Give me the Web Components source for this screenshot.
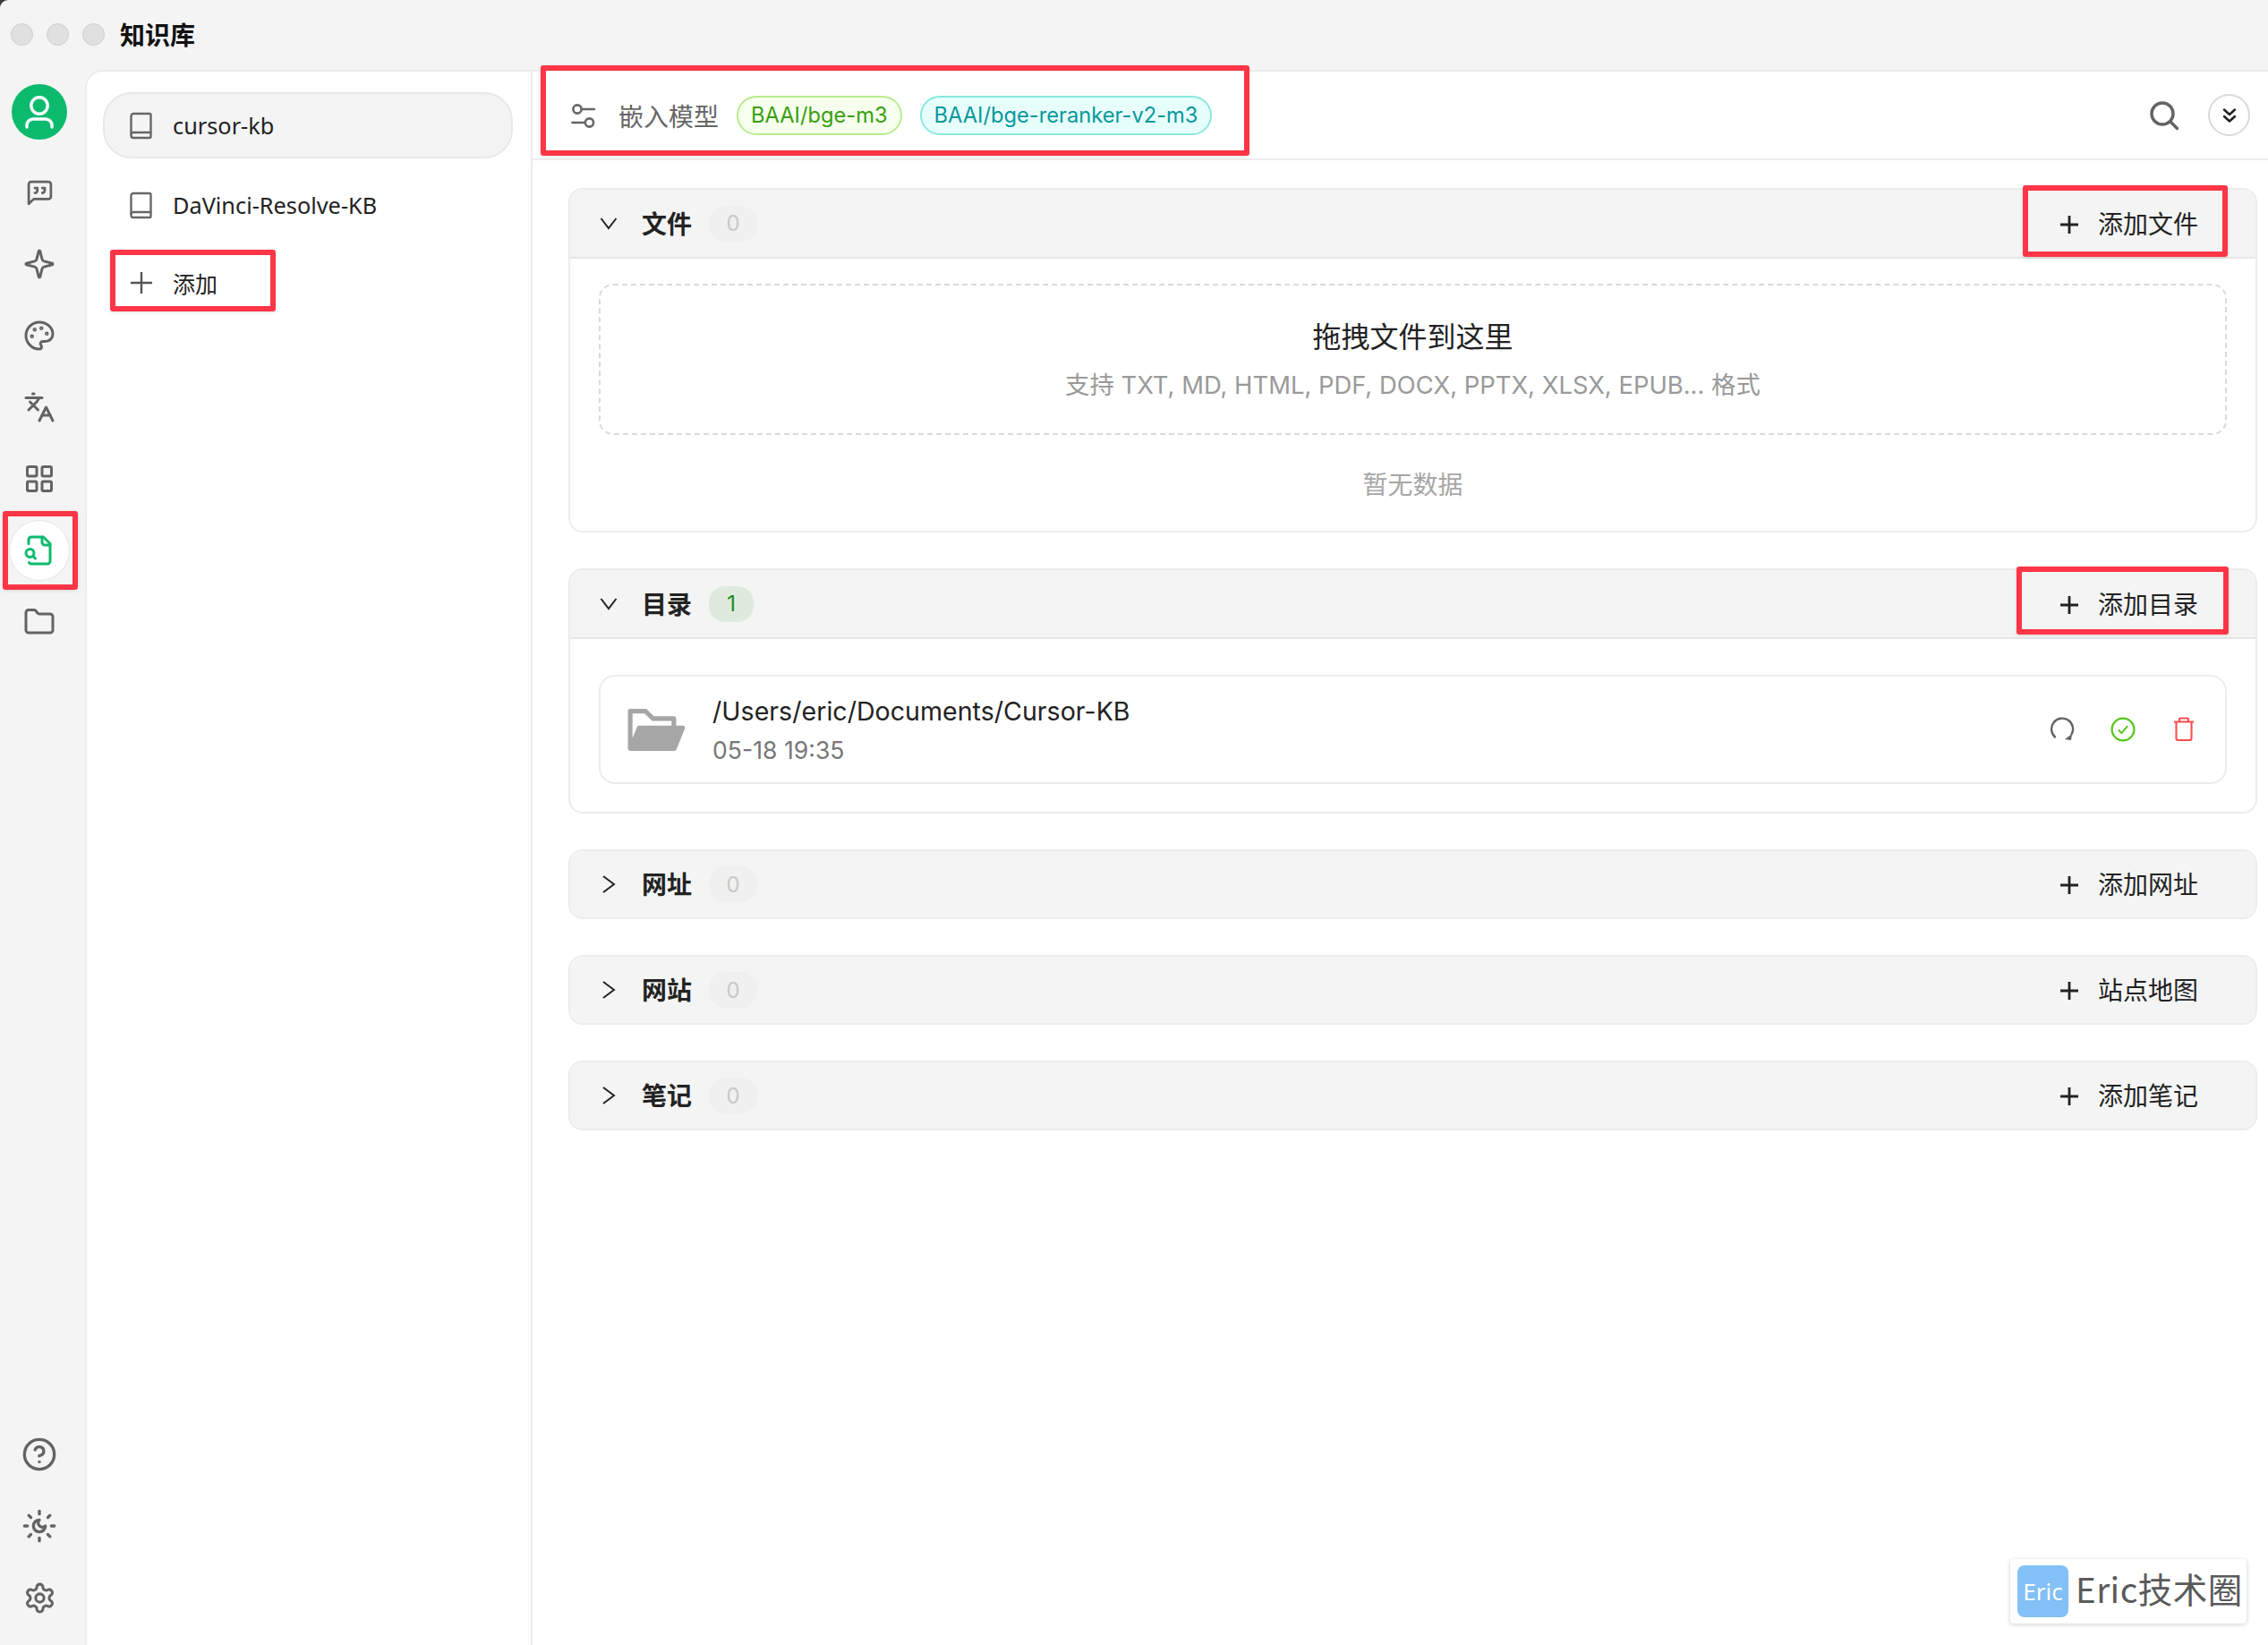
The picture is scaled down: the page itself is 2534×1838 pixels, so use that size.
<!DOCTYPE html>
<html lang="zh"><head><meta charset="utf-8"><title>知识库</title>
<style>
html,body{margin:0;padding:0;background:#3a3a3a}
body{font-family:"Inter","Noto Sans CJK SC",sans-serif;color:#222;width:2534px;height:1838px;overflow:hidden}
</style></head><body>
<app-window>
  <title-bar slot="title">知识库</title-bar>
  <nav-rail slot="rail">
    <user-avatar></user-avatar>
    <nav-icon name="chat" size="33"></nav-icon>
    <nav-icon name="sparkle"></nav-icon>
    <nav-icon name="palette"></nav-icon>
    <nav-icon name="languages"></nav-icon>
    <nav-icon name="grid"></nav-icon>
    <nav-icon name="filesearch" active></nav-icon>
    <nav-icon name="folder"></nav-icon>
    <nav-icon slot="bottom" name="help" size="40"></nav-icon>
    <nav-icon slot="bottom" name="sunmoon" size="40"></nav-icon>
    <nav-icon slot="bottom" name="settings" size="37"></nav-icon>
  </nav-rail>
  <kb-list slot="list">
    <kb-item active>cursor-kb</kb-item>
    <kb-item>DaVinci-Resolve-KB</kb-item>
    <kb-add>添加</kb-add>
  </kb-list>
  <kb-main slot="main">
    <kb-header slot="header">
      <kb-tag color="green">BAAI/bge-m3</kb-tag>
      <kb-tag color="cyan">BAAI/bge-reranker-v2-m3</kb-tag>
    </kb-header>
    <kb-section title="文件" count="0" action="添加文件" open>
      <drop-zone></drop-zone>
      <empty-note>暂无数据</empty-note>
    </kb-section>
    <kb-section title="目录" count="1" action="添加目录" open style="margin-top:40px">
      <dir-item path="/Users/eric/Documents/Cursor-KB" date="05-18 19:35"></dir-item>
    </kb-section>
    <kb-section title="网址" count="0" action="添加网址" style="margin-top:40px"></kb-section>
    <kb-section title="网站" count="0" action="站点地图" style="margin-top:40px"></kb-section>
    <kb-section title="笔记" count="0" action="添加笔记" style="margin-top:40px"></kb-section>
  </kb-main>
</app-window>
<red-mark x="3" y="571" w="84" h="88"></red-mark>
<red-mark x="123" y="279" w="185" h="69"></red-mark>
<red-mark x="604" y="73" w="792" h="101"></red-mark>
<red-mark x="2260" y="207" w="229" h="80"></red-mark>
<red-mark x="2253" y="633" w="237" h="76"></red-mark>
<water-mark></water-mark>
<script>
const ICONS={
 chat:'<path d="M21 15a2 2 0 0 1-2 2H7l-4 4V5a2 2 0 0 1 2-2h14a2 2 0 0 1 2 2z"/><path d="M8 12a2 2 0 0 0 2-2V8H8"/><path d="M14 12a2 2 0 0 0 2-2V8h-2"/>',
 sparkle:'<path d="M9.937 15.5A2 2 0 0 0 8.5 14.063l-6.135-1.582a.5.5 0 0 1 0-.962L8.5 9.936A2 2 0 0 0 9.937 8.5l1.582-6.135a.5.5 0 0 1 .963 0L14.063 8.5A2 2 0 0 0 15.5 9.937l6.135 1.581a.5.5 0 0 1 0 .964L15.5 14.063a2 2 0 0 0-1.437 1.437l-1.582 6.135a.5.5 0 0 1-.963 0z"/>',
 palette:'<circle cx="13.5" cy="6.5" r=".5" fill="currentColor"/><circle cx="17.5" cy="10.5" r=".5" fill="currentColor"/><circle cx="8.5" cy="7.5" r=".5" fill="currentColor"/><circle cx="6.5" cy="12.5" r=".5" fill="currentColor"/><path d="M12 2C6.5 2 2 6.5 2 12s4.5 10 10 10c.926 0 1.648-.746 1.648-1.688 0-.437-.18-.835-.437-1.125-.29-.289-.438-.652-.438-1.125a1.64 1.64 0 0 1 1.668-1.668h1.996c3.051 0 5.555-2.503 5.555-5.554C21.965 6.012 17.461 2 12 2z"/>',
 languages:'<path d="m5 8 6 6"/><path d="m4 14 6-6 2-3"/><path d="M2 5h12"/><path d="M7 2h1"/><path d="m22 22-5-10-5 10"/><path d="M14 18h6"/>',
 grid:'<rect width="7" height="7" x="3" y="3" rx="1"/><rect width="7" height="7" x="14" y="3" rx="1"/><rect width="7" height="7" x="14" y="14" rx="1"/><rect width="7" height="7" x="3" y="14" rx="1"/>',
 filesearch:'<path d="M14 2v4a2 2 0 0 0 2 2h4"/><path d="M4.268 21a2 2 0 0 0 1.727 1H18a2 2 0 0 0 2-2V7l-5-5H6a2 2 0 0 0-2 2v3"/><path d="m9 18-1.5-1.5"/><circle cx="5" cy="14" r="3"/>',
 folder:'<path d="M20 20a2 2 0 0 0 2-2V8a2 2 0 0 0-2-2h-7.9a2 2 0 0 1-1.69-.9L9.6 3.9A2 2 0 0 0 7.93 3H4a2 2 0 0 0-2 2v13a2 2 0 0 0 2 2Z"/>',
 help:'<circle cx="12" cy="12" r="10"/><path d="M9.09 9a3 3 0 0 1 5.83 1c0 2-3 3-3 3"/><path d="M12 17h.01"/>',
 sunmoon:'<path d="M12 8a2.83 2.83 0 0 0 4 4 4 4 0 1 1-4-4"/><path d="M12 2v2"/><path d="M12 20v2"/><path d="m4.9 4.9 1.4 1.4"/><path d="m17.7 17.7 1.4 1.4"/><path d="M2 12h2"/><path d="M20 12h2"/><path d="m6.3 17.7-1.4 1.4"/><path d="m19.1 4.9-1.4 1.4"/>',
 settings:'<path d="M12.22 2h-.44a2 2 0 0 0-2 2v.18a2 2 0 0 1-1 1.73l-.43.25a2 2 0 0 1-2 0l-.15-.08a2 2 0 0 0-2.73.73l-.22.38a2 2 0 0 0 .73 2.73l.15.1a2 2 0 0 1 1 1.72v.51a2 2 0 0 1-1 1.74l-.15.09a2 2 0 0 0-.73 2.73l.22.38a2 2 0 0 0 2.73.73l.15-.08a2 2 0 0 1 2 0l.43.25a2 2 0 0 1 1 1.73V20a2 2 0 0 0 2 2h.44a2 2 0 0 0 2-2v-.18a2 2 0 0 1 1-1.73l.43-.25a2 2 0 0 1 2 0l.15.08a2 2 0 0 0 2.73-.73l.22-.39a2 2 0 0 0-.73-2.73l-.15-.08a2 2 0 0 1-1-1.74v-.5a2 2 0 0 1 1-1.74l.15-.09a2 2 0 0 0 .73-2.73l-.22-.38a2 2 0 0 0-2.73-.73l-.15.08a2 2 0 0 1-2 0l-.43-.25a2 2 0 0 1-1-1.73V4a2 2 0 0 0-2-2z"/><circle cx="12" cy="12" r="3"/>'
};
function el(name,cls){customElements.define(name,cls)}
class Base extends HTMLElement{
  constructor(){super();this.attachShadow({mode:'open'})}
  connectedCallback(){this.shadowRoot.innerHTML=this.render()}
}
el('app-window',class extends Base{render(){return `<style>
 :host{display:grid;grid-template-columns:95px 500px 1fr;grid-template-rows:78px 1fr;width:2534px;height:1838px;background:#f4f4f4;border-top-left-radius:9px;overflow:hidden}
 .t{grid-column:1/4}.r{grid-row:2}
 .l{grid-row:2;background:#fff;border-top:2px solid #ececec;border-left:2px solid #ececec;border-top-left-radius:20px;border-right:2px solid #ececec;box-sizing:border-box;min-height:0}
 .m{grid-row:2;background:#fff;border-top:2px solid #ececec;box-sizing:border-box;min-width:0}
 </style><div class="t"><slot name="title"></slot></div><div class="r"><slot name="rail"></slot></div><div class="l"><slot name="list"></slot></div><div class="m"><slot name="main"></slot></div>`}});
el('title-bar',class extends Base{render(){return `<style>
 :host{display:flex;align-items:center;height:76px;padding-left:12px;gap:17px}
 i{display:block;width:23px;height:23px;border-radius:50%;background:#e0e0e0;border:1px solid #cfcfcf}
 .lights{display:flex;gap:15px}
 b{font:600 28px "Noto Sans CJK SC",sans-serif;color:#111}
 </style><div class="lights"><i></i><i></i><i></i></div><b><slot></slot></b>`}});
el('nav-rail',class extends Base{render(){return `<style>
 :host{display:flex;flex-direction:column;justify-content:space-between;align-items:center;height:1760px;width:88px;padding:16px 0 19px 0;box-sizing:border-box}
 .g{display:flex;flex-direction:column;align-items:center;gap:12px}
 </style><div class="g"><slot></slot></div><div class="g"><slot name="bottom"></slot></div>`}});
el('user-avatar',class extends Base{render(){return `<style>:host{display:block;width:62px;height:62px;margin-bottom:13px}svg{display:block}</style>
 <svg width="62" height="62" viewBox="0 0 62 62"><circle cx="31" cy="31" r="31" fill="#0cba6e"/><circle cx="31" cy="24" r="9.2" fill="none" stroke="#fff" stroke-width="3.4"/><path d="M17 48v-2a7 7 0 0 1 7-7h14a7 7 0 0 1 7 7v2" fill="none" stroke="#fff" stroke-width="3.4" stroke-linecap="round"/></svg>`}});
el('nav-icon',class extends Base{render(){
 const size=+this.getAttribute('size')||36,n=this.getAttribute('name'),a=this.hasAttribute('active');
 return `<style>:host{display:flex;align-items:center;justify-content:center;width:68px;height:68px;box-sizing:border-box;border-radius:50%;color:#636363;${a?'background:#fff;border:1.5px solid #e6e6e6;color:#0cba6e;':''}}</style>
 <svg width="${size}" height="${size}" viewBox="0 0 24 24" fill="none" stroke="currentColor" stroke-width="2" stroke-linecap="round" stroke-linejoin="round">${ICONS[n]}</svg>`}});
el('kb-list',class extends Base{render(){return `<style>:host{display:flex;flex-direction:column;padding:23px 20px 0 18px;gap:0}</style><slot></slot>`}});
const BOOK=`<svg width="26" height="31" viewBox="0 0 26 31" fill="none" stroke="#666" stroke-width="2.4" stroke-linejoin="round"><path d="M4 2h18a1.5 1.5 0 0 1 1.5 1.5v24a1.5 1.5 0 0 1-1.5 1.5H4a2.5 2.5 0 0 1-2.5-2.5v-22A2.5 2.5 0 0 1 4 2z"/><path d="M1.5 25.5a2.5 2.5 0 0 1 2.5-2.5h19.5"/></svg>`;
el('kb-item',class extends Base{render(){const a=this.hasAttribute('active');return `<style>
 :host{display:flex;align-items:center;height:74px;box-sizing:border-box;padding-left:28px;gap:22px;border-radius:32px;font:400 25.3px "Noto Sans",sans-serif;color:#222;border:2px solid transparent;margin-bottom:15px;${a?'background:#f4f4f4;border-color:#e8e8e8;':''}}
 svg{display:block;flex:none}
 </style>${BOOK}<span><slot></slot></span>`}});
el('kb-add',class extends Base{render(){return `<style>
 :host{display:flex;align-items:center;height:54px;padding-left:30px;gap:22px;font:400 25px "Noto Sans CJK SC",sans-serif;color:#222;margin-top:8px}
 svg{display:block}
 </style><svg width="26" height="26" viewBox="0 0 26 26" stroke="#555" stroke-width="2.4" fill="none"><path d="M1 13h24M13 1v24"/></svg><span><slot></slot></span>`}});
el('kb-main',class extends Base{render(){return `<style>
 :host{display:block}
 .body{padding:31px 12px 0 40px;display:block}
 </style><slot name="header"></slot><div class="body"><slot></slot></div>`}});
el('kb-header',class extends Base{render(){return `<style>
 :host{display:flex;align-items:center;height:99px;box-sizing:border-box;border-bottom:2px solid #ececec;padding:0 20px 0 43px;font:400 28px "Noto Sans CJK SC",sans-serif;color:#666}
 .f{display:block;margin-right:25px}
 .lbl{margin-right:20px}
 .tags{display:flex;gap:20px;flex:1}
 .s{display:block;margin-right:32px}
 .c{width:47px;height:47px;box-sizing:border-box;border:2px solid #d9d9d9;border-radius:50%;display:flex;align-items:center;justify-content:center}
 </style>
 <svg class="f" width="28" height="28" viewBox="0 0 28 28" fill="none" stroke="#666" stroke-width="2.6" stroke-linecap="round"><circle cx="7" cy="7" r="4.6"/><path d="M12 7h14"/><path d="M1.5 22h13"/><circle cx="20.5" cy="22" r="4.6"/></svg>
 <span class="lbl">嵌入模型</span><div class="tags"><slot></slot></div>
 <svg class="s" width="34" height="34" viewBox="0 0 34 34" fill="none" stroke="#636363" stroke-width="3.4" stroke-linecap="round"><circle cx="15" cy="15" r="12"/><path d="M24 24l7.5 7.5"/></svg>
 <div class="c"><svg width="18" height="18" viewBox="0 0 18 18" fill="none" stroke="#222" stroke-width="2.5" stroke-linecap="round" stroke-linejoin="round"><path d="M3 2.5l6 5.5 6-5.5"/><path d="M3 10l6 5.5 6-5.5"/></svg></div>`}});
el('kb-tag',class extends Base{render(){const g=this.getAttribute('color')==='green';return `<style>
 :host{display:inline-flex;align-items:center;height:44px;box-sizing:border-box;border-radius:22px;padding:0 14px;font:400 23.7px "Inter",sans-serif;border:2px solid ${g?'#b7eb8f':'#87e8de'};background:${g?'#f6ffed':'#e6fffb'};color:${g?'#389e0d':'#08979c'}}
 </style><slot></slot>`}});
el('kb-section',class extends Base{render(){
 const open=this.hasAttribute('open'),c=this.getAttribute('count');
 const chev=open?'<path d="M1.5 4l8.5 11 8.5-11"/>':'<path d="M4 1l12 9-12 9"/>';
 return `<style>
 :host{display:block;border:2px solid #ececec;border-radius:16px;overflow:hidden;box-sizing:border-box;background:#fff}
 .h{display:flex;align-items:center;height:${open?77:74}px;box-sizing:border-box;background:#f4f4f4;padding:0 64px 0 33px;${open?'border-bottom:2px solid #e6e6e6;':''}}
 svg.ch{display:block;margin-right:27px;flex:none}
 .t{font:600 28px "Noto Sans CJK SC",sans-serif;color:#222;margin-right:19px;padding-bottom:2px}
 .n{display:flex;align-items:center;justify-content:center;height:40px;min-width:${c==='0'?54:50}px;border-radius:18px;font:400 24px "Inter",sans-serif;background:${c==='0'?'#f0f0f0':'#dfeadf'};color:${c==='0'?'#c8c8c8':'#1c8c1c'}}
 .sp{flex:1}
 .a{display:flex;align-items:center;gap:21px;font:400 28px "Noto Sans CJK SC",sans-serif;color:#222}
 .a svg{display:block;position:relative;top:1px}
 .a span{padding-bottom:2px}
 .b{padding:${open?'0 32px':'0'}}
 </style><div class="h"><svg class="ch" width="20" height="20" viewBox="0 0 20 20" fill="none" stroke="#222" stroke-width="2" stroke-linejoin="miter">${chev}</svg><span class="t">${this.getAttribute('title')}</span><span class="n">${c}</span><span class="sp"></span><span class="a"><svg width="22" height="22" viewBox="0 0 22 22" stroke="#222" stroke-width="2.8" fill="none"><path d="M1 11h20M11 1v20"/></svg><span>${this.getAttribute('action')}</span></span></div><div class="b"><slot></slot></div>`}});
el('drop-zone',class extends Base{render(){return `<style>
 :host{display:flex;flex-direction:column;align-items:center;margin-top:28px;height:169px;box-sizing:border-box;border:2px dashed #d9d9d9;border-radius:16px;padding-top:32px}
 .a{font:400 32px "Noto Sans CJK SC",sans-serif;color:#222;line-height:46px}
 .b{font:400 27.4px "Inter","Noto Sans CJK SC",sans-serif;color:#999;line-height:36px;margin-top:15px}
 </style><div class="a">拖拽文件到这里</div><div class="b">支持 TXT, MD, HTML, PDF, DOCX, PPTX, XLSX, EPUB... 格式</div>`}});
el('empty-note',class extends Base{render(){return `<style>:host{display:block;text-align:center;font:400 28px/40px "Noto Sans CJK SC",sans-serif;color:#a6a6a6;margin-top:34px;padding-bottom:33px}</style><slot></slot>`}});
el('dir-item',class extends Base{render(){return `<style>
 :host{display:flex;align-items:center;margin:40px 0 31px;height:122px;box-sizing:border-box;border:2px solid #ececec;border-radius:18px;padding:0 32px 0 26px}
 .ic{display:block;flex:none;margin-right:26px}
 .tx{flex:1;min-width:0}
 .p{font:400 28.6px/40px "Inter",sans-serif;color:#222}
 .d{font:400 26.6px/36px "Inter",sans-serif;color:#777;margin-top:5px}
 .acts{display:flex;gap:40px;align-items:center}
 .acts svg{display:block}
 </style>
 <svg class="ic" width="73" height="73" viewBox="0 0 1024 1024" fill="#a6a6a6"><path d="M928 444H820V330.4c0-17.7-14.3-32-32-32H473L355.7 186.2a8.15 8.15 0 0 0-5.5-2.2H96c-17.7 0-32 14.3-32 32v592c0 17.7 14.3 32 32 32h698c13 0 24.8-7.9 29.7-20l134-332c1.5-3.8 2.3-7.9 2.3-12 0-17.7-14.3-32-32-32zm-180 0H238c-13 0-24.8 7.9-29.7 20L136 643.2V256h188.5l119.6 114.4H748V444z"/></svg>
 <div class="tx"><div class="p">${this.getAttribute('path')}</div><div class="d">${this.getAttribute('date')}</div></div>
 <div class="acts">
 <svg width="28" height="28" viewBox="0 0 28 28" fill="none"><path d="M6 22.5A12 12 0 1 1 24.5 19.5" stroke="#636363" stroke-width="2.4" stroke-linecap="round"/><path d="M25 19l-1 7-7-1z" fill="#636363"/></svg>
 <svg width="28" height="28" viewBox="0 0 28 28" fill="none" stroke="#52c41a" stroke-width="2.2"><circle cx="14" cy="14" r="12.4"/><path d="M8.8 14.5l3.6 3.6 6.8-8" stroke-width="1.9"/></svg>
 <svg width="28" height="28" viewBox="0 0 28 28" fill="none" stroke="#ff4d4f" stroke-width="2.1" stroke-linejoin="round"><path d="M3 5.5h22M5.5 6v18a2 2 0 0 0 2 2h13a2 2 0 0 0 2-2V6M9 5V2.5a1 1 0 0 1 1-1h8a1 1 0 0 1 1 1V5"/></svg>
 </div>`}});
el('red-mark',class extends Base{render(){const g=k=>this.getAttribute(k);return `<style>
 :host{position:absolute;left:${g('x')}px;top:${g('y')}px;width:${g('w')}px;height:${g('h')}px;box-sizing:border-box;border:6px solid #fd3546;border-radius:3px;box-shadow:0 1px 4px rgba(0,0,0,.12);pointer-events:none}
 </style>`}});
el('water-mark',class extends Base{render(){return `<style>
 :host{position:absolute;left:2246px;top:1742px;width:264px;height:72px;box-sizing:border-box;background:#fff;border-radius:4px;box-shadow:0 1px 5px rgba(0,0,0,.2);display:flex;align-items:center;padding-left:8px;gap:8px}
 .l{width:57px;height:58px;border-radius:8px;background:#82c0f5;color:#fff;display:flex;align-items:center;justify-content:center;font:400 26px "Noto Sans",sans-serif}
 .t{font:400 38.5px "Noto Sans CJK SC",sans-serif;color:#5a5a5a;white-space:nowrap;letter-spacing:.5px;padding-bottom:8px}
 </style><div class="l">Eric</div><div class="t">Eric技术圈</div>`}});
</script>
</body></html>
